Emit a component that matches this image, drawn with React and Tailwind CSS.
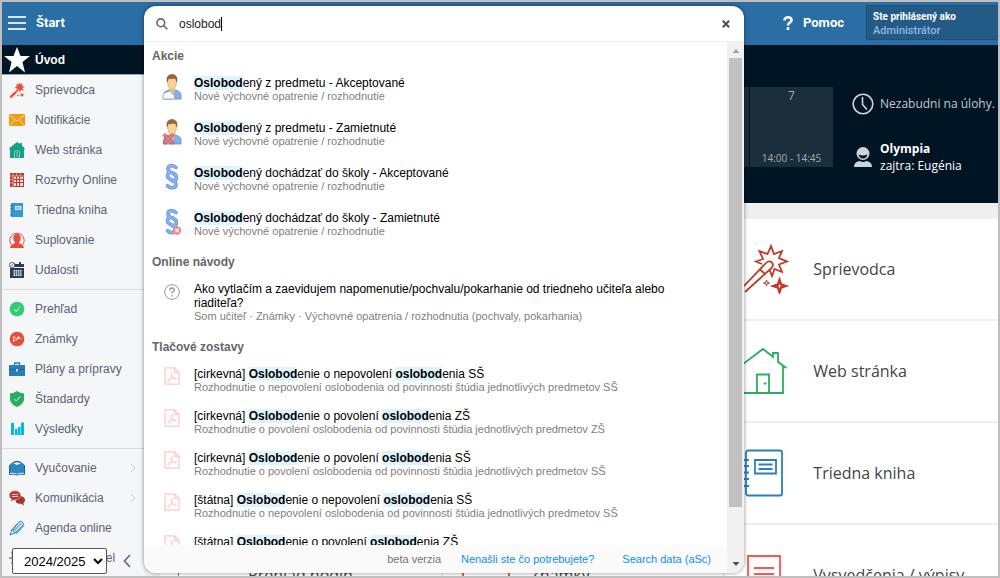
import React, { useState } from "react";

const LESSON = "Nové výchovné opatrenie / rozhodnutie";

const sections = [
  {
    title: "Akcie",
    gap: "gap-[18px]",
    items: [
      { icon: "person", title: "*Oslobod*ený z predmetu - Akceptované", sub: LESSON },
      { icon: "personX", title: "*Oslobod*ený z predmetu - Zamietnuté", sub: LESSON },
      { icon: "para", title: "*Oslobod*ený dochádzať do školy - Akceptované", sub: LESSON },
      { icon: "paraX", title: "*Oslobod*ený dochádzať do školy - Zamietnuté", sub: LESSON },
    ],
  },
  {
    title: "Online návody",
    gap: "gap-[15px]",
    items: [
      {
        icon: "help",
        title: "Ako vytlačím a zaevidujem napomenutie/pochvalu/pokarhanie od triedneho učiteľa alebo riaditeľa?",
        sub: "Som učiteľ · Známky · Výchovné opatrenia / rozhodnutia (pochvaly, pokarhania)",
      },
    ],
  },
  {
    title: "Tlačové zostavy",
    gap: "gap-[15px]",
    items: [
      {
        icon: "pdf",
        title: "[cirkevná] *Oslobod*enie o nepovolení *oslobod*enia SŠ",
        sub: "Rozhodnutie o nepovolení oslobodenia od povinnosti štúdia jednotlivých predmetov SŠ",
      },
      {
        icon: "pdf",
        title: "[cirkevná] *Oslobod*enie o povolení *oslobod*enia ZŠ",
        sub: "Rozhodnutie o povolení oslobodenia od povinnosti štúdia jednotlivých predmetov ZŠ",
      },
      {
        icon: "pdf",
        title: "[cirkevná] *Oslobod*enie o povolení *oslobod*enia SŠ",
        sub: "Rozhodnutie o povolení oslobodenia od povinnosti štúdia jednotlivých predmetov SŠ",
      },
      {
        icon: "pdf",
        title: "[štátna] *Oslobod*enie o nepovolení *oslobod*enia SŠ",
        sub: "Rozhodnutie o nepovolení oslobodenia od povinnosti štúdia jednotlivých predmetov SŠ",
      },
      { icon: "pdf", title: "[štátna] *Oslobod*enie o povolení *oslobod*enia ZŠ" },
    ],
  },
];

const menu = [
  [
    { icon: "wand", label: "Sprievodca" },
    { icon: "mail", label: "Notifikácie" },
    { icon: "house", label: "Web stránka" },
    { icon: "table", label: "Rozvrhy Online" },
    { icon: "book", label: "Triedna kniha" },
    { icon: "user", label: "Suplovanie" },
    { icon: "calendar", label: "Udalosti" },
  ],
  [
    { icon: "check", label: "Prehľad" },
    { icon: "grade", label: "Známky" },
    { icon: "case", label: "Plány a prípravy" },
    { icon: "shield", label: "Štandardy" },
    { icon: "bars", label: "Výsledky" },
  ],
  [
    { icon: "reader", label: "Vyučovanie", sub: true },
    { icon: "chat", label: "Komunikácia", sub: true },
    { icon: "pencil", label: "Agenda online" },
    { icon: "gear", label: "Ovládací panel" },
  ],
];

const menuIcons = {
  wand: (
    <g fill="#e74c3c">
      <path d="M1 14 8.2 7.2l1.6 1.6L3 15.6 1 16z" />
      <path d="m10.500 0 .9 2.600L14 1.200l-1 2.800 3 .9-2.700 1.200L15 8.800l-2.800-1-.8 2.700-1.400-2.400L7.600 6.400 5.400 5l2.700-.6L7 1.800l2.600 1z" />
      <path d="m13 10.500.7 1.800 1.800.7-1.800.7-.7 1.800-.7-1.800-1.800-.7 1.800-.7zM9 12l.4 1 1 .4-1 .4-.4 1-.4-1-1-.4 1-.4z" />
      <path d="m6.500 8.800 1.500 1.500" stroke="#f5f6f8" strokeWidth="0.8" />
    </g>
  ),
  mail: (
    <g>
      <path d="M0 2h16v12H0z" fill="#f39c12" />
      <path d="m.5 3 7.500 6 7.500-6M.5 13.500 6 8m9.500 5.500L10 8" fill="none" stroke="#fde3b4" />
    </g>
  ),
  house: (
    <g>
      <path d="M8 0 11 2V1h2v2.500L15.500 6v2H15v8H1V8H.5V6z" fill="#16a085" />
      <path d="M5.500 16V9.500q2.500-2 5 0V16M8 10v5" fill="none" stroke="#8ccfc2" />
    </g>
  ),
  table: (
    <g>
      <path d="M1 1h14v14H1z" fill="#c0392b" />
      <path d="M5 5h2v2H5zM8 5h2v2H8zM11 5h3v2h-3zM5 8h2v2H5zM8 8h2v2H8zM11 8h3v2h-3zM5 11h2v3H5zM8 11h2v3H8zM11 11h3v3h-3z" fill="#f7dcd9" />
      <path d="M1 4h14M4 1v14M7.500 1v3M11 1v3M1 7.500h3M1 11h3" stroke="#f2c9c5" strokeWidth="0.7" />
    </g>
  ),
  book: (
    <g>
      <path d="M2 1h12v14H2z" fill="#3498db" />
      <path d="M1 4h3M1 7h3M1 10h3M1 13h3" stroke="#2471a3" />
      <path d="M6 4h6.500v4H6z" fill="#d6eaf8" />
      <path d="M7 6h4.500" stroke="#3498db" />
    </g>
  ),
  user: (
    <g>
      <path d="M3.500 14A7.200 7.200 0 1 1 12.500 14" fill="none" stroke="#e74c3c" />
      <path d="M8 2c2.600 0 4 1.800 3.700 4.300C11.500 8.500 10.500 9.500 10 10.500c0 1.500 4.500 1.500 5 5.500H1c.5-4 5-4 5-5.500-.5-1-1.500-2-1.700-4.200C4 3.800 5.400 2 8 2z" fill="#e74c3c" />
    </g>
  ),
  calendar: (
    <g>
      <path d="M1 2h14v14H1z" fill="#2c3e50" />
      <path d="M5 1v3M11 0v4" stroke="#2c3e50" strokeWidth="2" />
      <path d="M1 5.500h14" stroke="#f5f6f8" />
      <path d="M4.500 8h8v6h-8z" fill="#dfe3e7" />
      <path d="M4 10h9M4 12h9M6.500 7.500v7M8.500 7.500v7M10.500 7.500v7" stroke="#2c3e50" strokeWidth="0.6" />
      <circle cx="3" cy="3" r="2.700" fill="#f5f6f8" stroke="#2c3e50" strokeWidth="0.7" />
      <path d="m1.500 4.500 3-3" stroke="#2c3e50" strokeWidth="0.700" />
    </g>
  ),
  check: (
    <g>
      <circle cx="8" cy="8" r="7.300" fill="#2ecc71" />
      <path d="m5 8 2.200 2.500L11 5.500" fill="none" stroke="#fff" />
    </g>
  ),
  grade: (
    <g fill="none" stroke="#fff" strokeWidth="0.8">
      <circle cx="8" cy="8" r="7.300" fill="#e74c3c" stroke="none" />
      <path d="m4.500 11 .2-5.500L9 8.500l-4 1M9.500 5v3M8 6.500h3M10.500 7l2 1" />
    </g>
  ),
  case: (
    <g>
      <path d="M0 4h16v11H0z" fill="#2980b9" />
      <path d="M5.500 4V2h5v2" fill="none" stroke="#2980b9" strokeWidth="1.300" />
      <path d="M0 8.500h16" stroke="#1f618d" />
      <path d="M7 8h2v2.500H7z" fill="#bcdcf0" />
    </g>
  ),
  shield: (
    <g>
      <path d="M8 0q3 2.300 7 2.500V9q-1 4.500-7 7-6-2.500-7-7V2.500Q5 2.300 8 0z" fill="#27ae60" />
      <path d="m5.500 8 1.800 2L11 5.500" fill="none" stroke="#d5f5e3" />
    </g>
  ),
  bars: <path d="M2 2h3v12H2zM6 8h2.500v6H6zM9 6h2.500v8H9zM12 1.500h3V14h-3z" fill="#00bcd4" />,
  reader: (
    <g>
      <path d="M2 4.500Q8-1.500 14 4.500" fill="none" stroke="#2471a3" strokeWidth="1.200" />
      <path d="M1 4q4-1 7 1 3-2 7-1v9q-4-1-7 1-3-2-7-1z" fill="#2e86c1" />
      <path d="M.5 5v9.500q4.500-1 7.500.5 3-1.500 7.500-.5V5" fill="none" stroke="#1f618d" />
    </g>
  ),
  chat: (
    <g>
      <path d="M10 6c4 0 6 2 6 4 0 1.500-.7 2.400-1.600 3l.6 2.500-2.800-1.700C8 14 6.500 12.500 6.500 10z" fill="#a93226" />
      <path d="M6 .8c3.500 0 5.800 2 5.800 4.500S9.500 10 6 10l-1 0-3 1.800.4-2.700C1 8.300.2 7 .2 5.300.2 2.800 2.500.8 6 .8z" fill="#c0392b" stroke="#f5f6f8" strokeWidth="0.400" />
      <path d="M3 4.500h6M3 6.500h6" stroke="#f5d0cc" />
    </g>
  ),
  pencil: (
    <g fill="none" stroke="#2980b9">
      <path d="M1 15 3 9.500 10 2q2-1.500 3.500 0M1 15l5-2 8-8q1-1.500-.5-3M3 9.500 6 13M9 3l-5 7" />
      <path d="M5 11 12.500 3M7 14l8-9" stroke="#5dade2" strokeWidth="1.500" />
    </g>
  ),
  gear: (
    <g fill="none" stroke="#95a5a6">
      <circle cx="8" cy="8" r="4.500" strokeWidth="3" />
      <path d="M8 0v16M0 8h2.500M13.500 8H16M2.300 2.300l2 2M2.300 13.700l2-2" strokeWidth="2" />
    </g>
  ),
};

function Person({ rejected }) {
  return (
    <svg viewBox="0 0 20 26" className="w-5 h-[26px]">
      <path d="M1.500 25v-4q.5-4 5-5h7q5 1 5.500 5v4z" fill="#82b1ea" stroke="#6089c0" strokeWidth="0.8" />
      <path d="M7.500 14h5v4L10 21l-2.500-3z" fill="#e9c583" />
      <path d="M5.500 5Q6 2 10 2t4.500 3l-.3 6Q12.500 16 10 16t-4.200-5z" fill="#f6d497" stroke="#c79b5b" strokeWidth="0.500" />
      <path d="M5.200 8C4.200 2.500 6.500.5 10 .5s5.800 2 4.800 7.500l-1-3q-1.300-1-3.800-.5-2.500.5-3.800 0z" fill="#9b663f" stroke="#80502d" strokeWidth="0.500" />
      {rejected ? (
        <path d="m1 16.500 2-2L6.500 18l4-3.500 1.500 2-3.500 3.500 3.500 3.500-1.500 2-4-3.500L3 25.500l-2-2L4.500 20z" fill="#f07b7b" stroke="#c93f45" strokeWidth="0.800" />
      ) : (
        <path d="m7.500 17 5 4.500q1 3-1 3.500H1q-1-5 2.500-6.500z" fill="#f8fafc" stroke="#8d9299" strokeWidth="0.700" />
      )}
    </svg>
  );
}

function Paragraph({ rejected }) {
  const shape =
    "M14 3.500Q12 1.800 9.500 1.800 6 1.800 6 5q0 2.500 4.500 4 4 1.500 4 5 0 2.500-4 3M8 8.500Q5 9.500 5.500 12.500q.5 2 4.500 3.500 4 1.800 4 4.500 0 3.200-4 3.200-2.500 0-4.500-2";
  return (
    <svg viewBox="0 0 20 26" className="w-5 h-[26px]">
      <g fill="none" strokeLinecap="round">
        <path d={shape} stroke="#5686cb" strokeWidth="3.500" />
        <path d={shape} stroke="#83b2ef" strokeWidth="2.500" />
      </g>
      {rejected && (
        <g>
          <circle cx="15" cy="21.500" r="4.200" fill="#f58385" />
          <path d="m13.300 19.800 3.400 3.400m0-3.400-3.400 3.400" stroke="#fff" strokeWidth="1.300" />
        </g>
      )}
    </svg>
  );
}

const resultIcons = {
  person: <Person />,
  personX: <Person rejected />,
  para: <Paragraph />,
  paraX: <Paragraph rejected />,
  help: (
    <svg viewBox="0 0 16 16" className="w-4 h-4 mt-1" fill="none" stroke="#999">
      <circle cx="8" cy="8" r="7.300" />
      <path d="M5.800 6.300q0-2.300 2.300-2.300t2.200 2q0 1-1.200 1.700T8 9.500M8 11v1.500" strokeWidth="1.400" />
    </svg>
  ),
  pdf: (
    <svg viewBox="0 0 16 18" className="w-4 h-[18px] mt-0.5" fill="none" stroke="#ffc9c9" strokeWidth="1.300">
      <path d="M1 .8h9.500L15 5.200v12H1zM10.500.8v4.500H15" />
      <path d="M7.500 5.500c-1.300.5-.3 3 .8 4.600 1.200 1.600 3.500 2.600 4 1.800.5-1-2.800-1.200-4.800-.6-2 .5-4.300 1.800-3.800 2.800.7 1 2.700-1.600 3.700-3.900.9-2.200 1.200-4.700.1-4.700z" strokeWidth="1" />
    </svg>
  ),
};

const tileIcons = {
  wand: (
    <g stroke="#c0392b" strokeWidth="1.800">
      <path d="m19 20-6-2.500 7-2.500-3.500-8 8 3 3.500-8 3 8 8-3-3 7 8 3.500-8 3 3 7.500-7.500-3L29 32l-2.500-6" />
      <path d="m0 43 23-24q3-3 6-.5 2 3-.5 5.500L2 48M17 25.500l5 4.500" />
      <path d="m36.500 36 1.500 4.500 4.500 1.500-4.500 1.500-1.500 4.500-1.500-4.500-4.500-1.500 4.500-1.500z" strokeWidth="2.400" />
      <path d="m23.500 36 .7 2.300 2.300.7-2.300.7-.7 2.300-.7-2.300-2.300-.7 2.300-.7z" strokeWidth="1" />
    </g>
  ),
  house: (
    <g stroke="#27ae60" strokeWidth="1.800">
      <path d="M0 18 20 3l10 8V7h5v9l8.500 6M40 20v27H0V18M14 47V28.500h12V47" />
      <path d="M21 37h2v1h-2z" strokeWidth="1" />
    </g>
  ),
  book: (
    <g stroke="#2980b9" strokeWidth="1.800">
      <rect x="3" y="2.500" width="36" height="45" rx="2" />
      <path d="M0 12h6M0 18h6M0 24.500h6M0 31h6M0 38h6M12 12h21v13.500H12zM15.500 16.500h14M15.500 21h14" />
    </g>
  ),
  sheet: (
    <path d="M5 6h32v48H5zM11 18h20M11 24h20" stroke="#ff5252" strokeWidth="1.800" />
  ),
  clock: <path d="M0 27a24 24 0 0 1 54 0M15 10l8 6M34 8l-6 8" stroke="#27ae60" strokeWidth="1.800" />,
  marks: <path d="M2 50V4h46v46M12 12l6-4 6 5M30 9l8 4" stroke="#e74c3c" strokeWidth="1.800" />,
};

function Tile({ icon, label }) {
  return (
    <a href="#tile" className="flex items-center h-[100px] bg-white pl-3 overflow-hidden">
      {icon && (
        <>
          <svg viewBox="0 0 50 50" className="w-[50px] h-[50px] ml-1.5 shrink-0" fill="none">
            {tileIcons[icon]}
          </svg>
          <span className="ml-5 text-[16px] text-[#444] whitespace-nowrap">{label}</span>
        </>
      )}
    </a>
  );
}

// *text* marks the part that matches the query
function Highlighted({ text }) {
  return text.split("*").map((part, i) =>
    i % 2 ? (
      <b key={i} className="bg-[#def3fd]">{part}</b>
    ) : (
      <React.Fragment key={i}>{part}</React.Fragment>
    )
  );
}

function SearchPanel() {
  const [query, setQuery] = useState("oslobod");

  return (
    <div className="absolute top-1 bottom-[3px] left-[142px] w-[600px] flex flex-col bg-white rounded-xl overflow-hidden shadow-[0_0_4px_rgba(0,0,0,0.45)]">
      {/* Query */}
      <div className="flex items-center h-9 shrink-0 px-3 border-b border-[#eee]">
        <svg viewBox="0 0 12 12" className="w-3 h-3 mr-[11px]" fill="none" stroke="#666" strokeWidth="1.600">
          <circle cx="4.800" cy="4.800" r="3.900" />
          <path d="m7.800 7.800 3.500 3.500" />
        </svg>
        <input
          aria-label="Hľadať"
          value={query}
          onChange={(e) => setQuery(e.target.value)}
          className="field-sizing-content text-[12px] text-[#222] outline-none"
        />
        <span className="w-px h-3.5 bg-black"></span>
        <button aria-label="Zavrieť" className="ml-auto w-3 flex justify-center">
          <svg viewBox="0 0 8 8" className="w-2 h-2" stroke="#555" strokeWidth="2.200">
            <path d="m.8.8 6.400 6.400m0-6.400L.8 7.200" />
          </svg>
        </button>
      </div>

      <div className="flex flex-1 min-h-0">
        <div className="flex flex-col flex-1 min-w-0">
          {/* Results */}
          <div className="flex-1 overflow-hidden pt-1.5 pl-2 flex flex-col gap-4">
            {sections.map((section) => (
              <section key={section.title} className="shrink-0">
                <h2 className="text-[12px] leading-[17px] font-bold text-[#666]">{section.title}</h2>
                <ul className={`pt-[11px] flex flex-col ${section.gap}`}>
                  {section.items.map((item, i) => (
                    <li key={i} className="flex">
                      <span className="w-10 h-6 shrink-0 -mt-0.5 mr-0.5 flex justify-center items-start">
                        {resultIcons[item.icon]}
                      </span>
                      <div className="pr-12">
                        <p className="text-[12px] leading-[14px] text-black">
                          <Highlighted text={item.title} />
                        </p>
                        {item.sub && <p className="text-[11px] leading-[13px] text-[#808080]">{item.sub}</p>}
                      </div>
                    </li>
                  ))}
                </ul>
              </section>
            ))}
          </div>
          {/* Footer */}
          <div className="flex items-center justify-end h-7 shrink-0 bg-[#fafafa] pr-4 text-[11px]">
            <span className="text-[#757575] mr-5">beta verzia</span>
            <a href="#help" className="text-[#0f8fe8] font-medium mr-7">Nenašli ste čo potrebujete?</a>
            <a href="#data" className="text-[#0f8fe8] font-medium">Search data (aSc)</a>
          </div>
        </div>

        {/* Scrollbar */}
        <div className="w-[17px] shrink-0 bg-[#f1f1f1] flex flex-col items-center">
          <svg viewBox="0 0 16 16" className="w-4 h-4 shrink-0" fill="#a3a3a3">
            <path d="m4.500 11 3.500-4 3.500 4z" />
          </svg>
          <div className="w-[13px] flex-[9] bg-[#c1c1c1]"></div>
          <div className="flex-1"></div>
          <svg viewBox="0 0 16 16" className="w-4 h-4 shrink-0" fill="#505050">
            <path d="m4.500 5 3.500 4 3.500-4z" />
          </svg>
        </div>
      </div>
    </div>
  );
}

function Sidebar() {
  return (
    <nav className="relative w-[142px] shrink-0 bg-[#f5f6f8] overflow-hidden text-[12px] text-[#596276]">
      <a href="#uvod" className="flex items-center h-[30px] pl-0.5 bg-[#001524] border-b border-[#8fa5b8] text-white font-bold">
        <svg viewBox="0 0 26 26" className="w-[26px] h-[26px] mr-[5px]" fill="#fff">
          <path d="m13 0 3.500 9H26l-7.500 6L21 25.500l-8-6.500-8 6.500L7.500 15 0 9h9.500z" />
        </svg>
        Úvod
      </a>
      {menu.map((group, g) => (
        <ul key={g} className={g ? "mt-1 pt-1 border-t border-[#d8dadd]" : ""}>
          {group.map((item) => (
            <li key={item.label}>
              <a href="#menu" className="flex items-center h-[30px] pl-[7px] pr-2">
                <svg viewBox="0 0 16 16" className="w-4 h-4 mr-2.5 shrink-0">
                  {menuIcons[item.icon]}
                </svg>
                {item.label}
                {item.sub && (
                  <svg viewBox="0 0 6 10" className="w-1.5 h-2.5 ml-auto" fill="none" stroke="#c8ccd2">
                    <path d="m1 1 4 4-4 4" />
                  </svg>
                )}
              </a>
            </li>
          ))}
        </ul>
      ))}
      <div className="absolute bottom-0.5 left-2.5 flex items-center gap-4">
        <select
          aria-label="Školský rok"
          className="w-[95px] h-[26px] pl-[7px] pr-0 bg-white border border-[#555] rounded-xs text-[13px] text-black"
        >
          <option>2024/2025</option>
        </select>
        <button aria-label="Zbaliť menu">
          <svg viewBox="0 0 8 14" className="w-2 h-3.5" fill="none" stroke="#60758a" strokeWidth="1.800">
            <path d="M7 1 1.500 7 7 13" />
          </svg>
        </button>
      </div>
    </nav>
  );
}

export default function App() {
  return (
    <div className="relative h-screen flex flex-col border-2 border-[#bfbfbf] overflow-hidden font-['Liberation_Sans',Arial,sans-serif]">
      {/* Top bar */}
      <header className="flex items-center h-[43px] shrink-0 pl-1.5 pb-0.5 bg-[#2a6ea5] text-white font-['Roboto',sans-serif]">
        <button aria-label="Menu" className="flex flex-col gap-1 mr-2.5">
          <span className="w-[18px] h-0.5 bg-[#dbe8f2]"></span>
          <span className="w-[18px] h-0.5 bg-[#dbe8f2]"></span>
          <span className="w-[18px] h-0.5 bg-[#dbe8f2]"></span>
        </button>
        <span className="text-[13px] font-bold">Štart</span>
        <a href="#pomoc" className="ml-auto mr-[22px] flex items-center text-[13px] font-bold">
          <svg viewBox="0 0 10 14" className="w-2.5 h-3.5 mr-2.5" fill="none" stroke="#fff" strokeWidth="2.600">
            <path d="M1.500 4.500Q1.500 1.300 5 1.300t3.500 2.900q0 1.500-1.800 2.400T5 9.500M5 11.200V14" />
          </svg>
          Pomoc
        </a>
        <div className="w-[132px] h-[35px] pl-1.5 pt-1 bg-[#235a86] border border-r-0 border-[#1f507a] text-[10px] leading-[14px] font-bold">
          <p>Ste prihlásený ako</p>
          <p className="text-[#8fb8e8] text-[11px] font-medium">Administrátor</p>
        </div>
      </header>

      <div className="flex flex-1 min-h-0">
        <Sidebar />
        <main className="flex-1 min-w-0 overflow-hidden bg-[#efefef] font-['Open_Sans',sans-serif]">
          <div className="flex h-[158px] bg-[#001524] pt-[42px]">
            <div className="flex flex-1 gap-px justify-end text-[#a5adb5]">
              <div className="w-[83px] h-20 bg-[#1c2d3b]"></div>
              <div className="w-[83px] h-20 bg-[#1c2d3b] flex flex-col justify-between items-center">
                <span className="text-[12px] leading-[18px]">7</span>
                <span className="text-[10px] leading-[18px]">14:00 - 14:45</span>
              </div>
            </div>
            <div className="w-[165px] pl-[19px] pt-[5px] text-[12px] whitespace-nowrap">
              <div className="flex items-center h-6 gap-1.5 text-[#c3c9ce]">
                <svg viewBox="0 0 22 22" className="w-[22px] h-[22px]" fill="none" stroke="#d0d4d8" strokeWidth="1.600">
                  <circle cx="11" cy="11" r="9.800" />
                  <path d="M10.500 4v7.500l4.500 5" />
                </svg>
                Nezabudni na úlohy.
              </div>
              <div className="flex items-center mt-6 gap-1.5 text-white leading-[17px]">
                <svg viewBox="0 0 22 22" className="w-[22px] h-[22px]" fill="#d0d4d8">
                  <circle cx="11" cy="7.500" r="6.500" />
                  <path d="M6.500 8.500q4.500 2 9 0-1 4-4.500 4t-4.500-4z" fill="#001524" />
                  <path d="M2 21q0-5 5.500-6 3.500 2 7 0 5.500 1 5.500 6z" />
                </svg>
                <p>
                  <b className="block">Olympia</b>
                  zajtra: Eugénia
                </p>
              </div>
            </div>
          </div>

          {/* Tiles */}
          <div className="grid grid-cols-3 gap-0.5 mt-4 ml-4 -mr-2">
            <Tile />
            <Tile />
            <Tile icon="wand" label="Sprievodca" />
            <Tile />
            <Tile />
            <Tile icon="house" label="Web stránka" />
            <Tile />
            <Tile />
            <Tile icon="book" label="Triedna kniha" />
            <Tile icon="clock" label="Prehľad hodín" />
            <Tile icon="marks" label="Známky" />
            <Tile icon="sheet" label="Vysvedčenia / výpisy" />
          </div>
        </main>
      </div>

      <SearchPanel />
    </div>
  );
}
